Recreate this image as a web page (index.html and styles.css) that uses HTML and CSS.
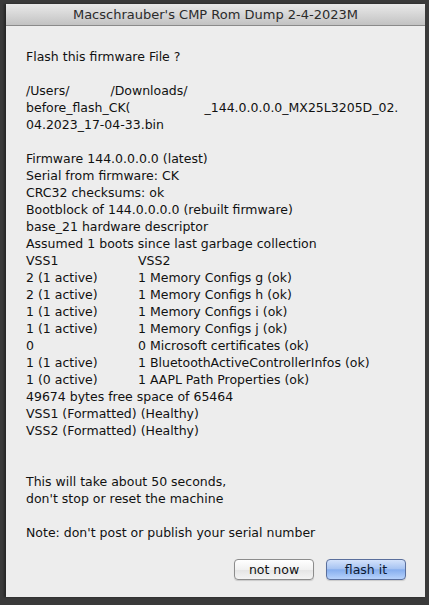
FILE: index.html
```html
<!DOCTYPE html>
<html>
<head>
<meta charset="utf-8">
<link rel="stylesheet" href="styles.css">
</head>
<body>
<div class="window">
  <div class="titlebar">Macschrauber's CMP Rom Dump 2-4-2023M</div>
  <div class="content">
    <div class="line">Flash this firmware File ?</div>
    <div class="line"></div>
    <div class="line">/Users/<span class="gap g1"></span>/Downloads/</div>
    <div class="line">before_flash_CK(<span class="gap g2"></span>_144.0.0.0.0_MX25L3205D_02.</div>
    <div class="line">04.2023_17-04-33.bin</div>
    <div class="line"></div>
    <div class="line">Firmware 144.0.0.0.0 (latest)</div>
    <div class="line">Serial from firmware: CK</div>
    <div class="line">CRC32 checksums: ok</div>
    <div class="line">Bootblock of 144.0.0.0.0 (rebuilt firmware)</div>
    <div class="line">base_21 hardware descriptor</div>
    <div class="line">Assumed 1 boots since last garbage collection</div>
    <div class="row"><span class="c1">VSS1</span><span>VSS2</span></div>
    <div class="row"><span class="c1">2 (1 active)</span><span>1 Memory Configs g (ok)</span></div>
    <div class="row"><span class="c1">2 (1 active)</span><span>1 Memory Configs h (ok)</span></div>
    <div class="row"><span class="c1">1 (1 active)</span><span>1 Memory Configs i (ok)</span></div>
    <div class="row"><span class="c1">1 (1 active)</span><span>1 Memory Configs j (ok)</span></div>
    <div class="row"><span class="c1">0</span><span>0 Microsoft certificates (ok)</span></div>
    <div class="row"><span class="c1">1 (1 active)</span><span>1 BluetoothActiveControllerInfos (ok)</span></div>
    <div class="row"><span class="c1">1 (0 active)</span><span>1 AAPL Path Properties (ok)</span></div>
    <div class="line">49674 bytes free space of 65464</div>
    <div class="line">VSS1 (Formatted) (Healthy)</div>
    <div class="line">VSS2 (Formatted) (Healthy)</div>
    <div class="line"></div>
    <div class="line"></div>
    <div class="line">This will take about 50 seconds,</div>
    <div class="line">don't stop or reset the machine</div>
    <div class="line"></div>
    <div class="line">Note: don't post or publish your serial number</div>
  </div>
  <div class="buttons">
    <button class="btn">not now</button>
    <button class="btn default">flash it</button>
  </div>
</div>
</body>
</html>
```
FILE: styles.css
```css
html, body {
  margin: 0;
  padding: 0;
}
body {
  width: 429px;
  height: 605px;
  background: #3a3a3a;
  font-family: "DejaVu Sans", "Liberation Sans", sans-serif;
  overflow: hidden;
}
.window {
  margin: 4px 0 0 6px;
  width: 419px;
  height: 593px;
  background: #ededed;
  display: flex;
  flex-direction: column;
  box-shadow: -2px 0 2px rgba(0,0,0,0.35);
}
.titlebar {
  height: 22px;
  flex: none;
  background: linear-gradient(#e9e9e9, #d2d2d2 60%, #c2c2c2);
  border-bottom: 1px solid #8a8a8a;
  border-radius: 4px 4px 0 0;
  box-sizing: border-box;
  text-align: center;
  font-size: 13px;
  line-height: 22px;
  color: #2b2b2b;
}
.content {
  flex: 1;
  padding: 22px 0 0 20px;
  font-size: 12.5px;
  line-height: 17px;
  color: #111;
}
.line {
  height: 17px;
  white-space: nowrap;
}
.row {
  height: 17px;
  display: flex;
  white-space: nowrap;
}
.c1 {
  width: 112px;
  flex: none;
}
.gap {
  display: inline-block;
}
.g1 { width: 41px; }
.g2 { width: 74px; }
.buttons {
  display: flex;
  justify-content: flex-end;
  gap: 12px;
  padding: 0 19px 17px 0;
}
.btn {
  width: 80px;
  height: 21px;
  box-sizing: border-box;
  border: 1px solid #8c8c8c;
  border-radius: 4px;
  background: linear-gradient(#ffffff, #f1f1f1 50%, #e4e4e4 51%, #f4f4f4);
  font-family: "DejaVu Sans", "Liberation Sans", sans-serif;
  font-size: 12.5px;
  color: #111;
  padding: 0;
  box-shadow: 0 1px 1px rgba(0,0,0,0.15);
}
.btn.default {
  border-color: #5a6f9c;
  background: linear-gradient(#d4e2fb, #a8c4f2 45%, #86aeee 52%, #b7d2fb);
  color: #0c1a33;
}
```
